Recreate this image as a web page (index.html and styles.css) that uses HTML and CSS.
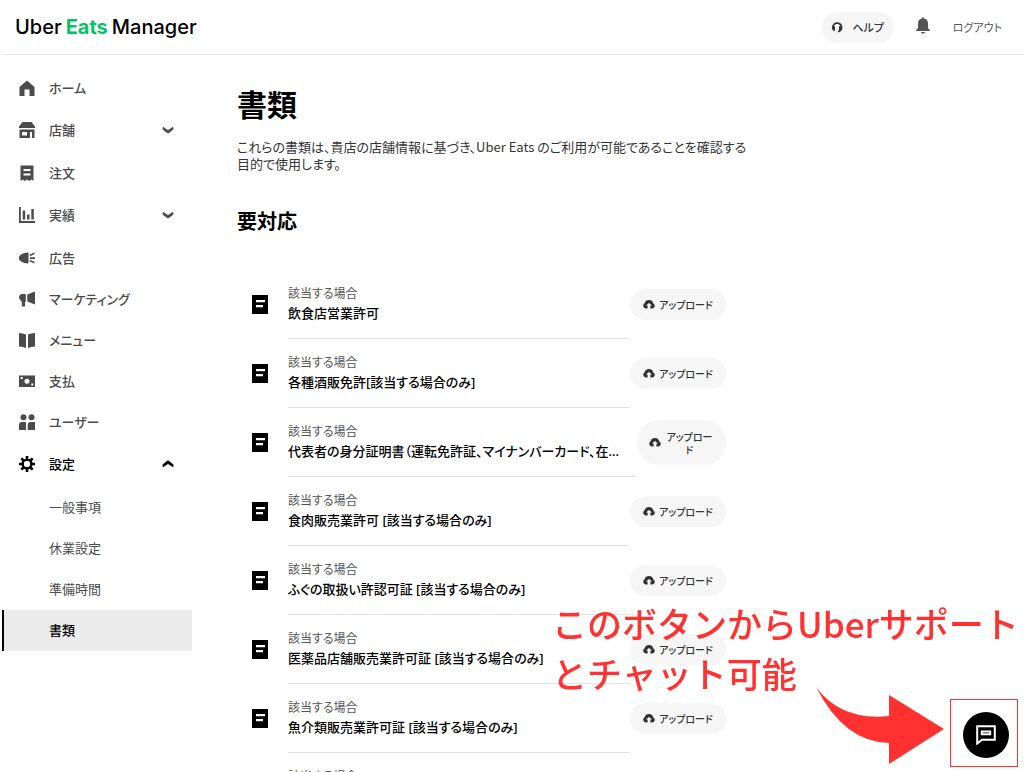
FILE: index.html
```html
<!DOCTYPE html>
<html lang="ja">
<head>
<meta charset="utf-8">
<meta name="viewport" content="width=device-width, initial-scale=1">
<title>書類 - Uber Eats Manager</title>
<link rel="stylesheet" href="styles.css">
</head>
<body>
<svg class="sprite" aria-hidden="true">
  <symbol id="chevron" viewBox="0 0 12 8"><path d="M1 1.300v2.200L6 7.200l5-3.700V1.300L6 4.400z" fill="currentColor" stroke="currentColor" stroke-width=".8"/></symbol>
  <symbol id="doc" viewBox="0 0 16 19"><path fill="currentColor" d="M0 0h16v19H0z"/><path fill="#fff" d="M4 5h9v2.200H4zM4 10h7v2.200H4z"/></symbol>
  <symbol id="cloud" viewBox="0 0 12 9"><path fill="currentColor" d="M4.600 8.500H3A2.800 2.800 0 0 1 1.600 3.300 4.500 4.500 0 0 1 10.300 3.400 2.700 2.700 0 0 1 9 8.500H7.400V5.600H9L6 2.900 3 5.600h1.600z"/></symbol>
</svg>
<header class="topbar">
  <a class="logo" href="#"><span>Uber</span><span class="logo-eats">Eats</span><span>Manager</span></a>
  <div class="actions">
    <button class="pill help" type="button">
      <svg class="help-icon" viewBox="0 0 12 12" aria-hidden="true"><path d="M2.300 8.500A4.400 4.400 0 1 1 10.600 6.500Q10.500 9.800 7 10.600" fill="none" stroke="currentColor" stroke-width="1.700"/><path d="M1 5.300h3v4.400H2.300zM8 5.300h3V8L9.600 9.700H8z" fill="currentColor"/></svg>
      ヘルプ
    </button>
    <button class="bell" type="button" aria-label="通知">
      <svg viewBox="0 0 14 18" aria-hidden="true"><path fill="currentColor" d="M6 1.500V.5h2v1q4 .7 4 5V11l2 2.500V14H0v-.5L2 11V6.500q0-4.300 4-5zM4.500 15h5L7 17z"/></svg>
    </button>
    <a class="logout" href="#">ログアウト</a>
  </div>
</header>
<div class="layout">
  <nav class="sidebar" aria-label="メイン">
    <a class="item" href="#"><svg class="icon" viewBox="0 0 16 16"><path d="M8 .5 15.500 7v9h-5V9.500h-5V16h-5V7z"/></svg><span>ホーム</span></a>
    <a class="item group" href="#"><svg class="icon" viewBox="0 0 16 16"><path d="M3.500 0h9L16 4.500V6H0V4.500zM.5 7.500h15V16H13v-6h-2v6H.5zM3 10v3.500h5V10z" fill-rule="evenodd"/></svg><span>店舗</span><svg class="chev"><use href="#chevron"/></svg></a>
    <a class="item" href="#"><svg class="icon" viewBox="0 0 16 16"><path d="M1.500.5h13V16l-2-1.500-2.200 1.500L8 14.500 5.700 16l-2.200-1.500-2 1.500zM4.500 4v2h7V4zm0 4.500v2h7v-2z" fill-rule="evenodd"/></svg><span>注文</span></a>
    <a class="item group" href="#"><svg class="icon" viewBox="0 0 16 16"><path d="M0 0h1.800v14H16v2H0zM3.700 3.500h2.500v9H3.700zM8 7.500h2.500v5H8zM12.300 2h2.500v10.500h-2.500z"/></svg><span>実績</span><svg class="chev"><use href="#chevron"/></svg></a>
    <a class="item" href="#"><svg class="icon" viewBox="0 0 16 16"><path d="M9.500 2.500v11q-5 0-7.500-2L0 9.500v-3l2-2q2.500-2 7.500-2zM10.800 4.500 15.500 2.500v1.800l-4.700 1.900zM11 7.200h5v1.700h-5zM10.800 9.800l4.700 2v1.800l-4.700-2z"/></svg><span>広告</span></a>
    <a class="item" href="#"><svg class="icon" viewBox="0 0 16 16"><path d="M6.800 3v8H6v4.500H2.800V11.200L1.500 9Q0 8 0 6.500 0 3 3.500 3zM8.300 3.500 16 .5v13l-7.700-3z"/></svg><span>マーケティング</span></a>
    <a class="item" href="#"><svg class="icon" viewBox="0 0 16 16"><path d="M0 1q4 0 7 1.500V16q-3-1.500-7-1.500zM16 1q-4 0-7 1.500V16q3-1.500 7-1.500z"/></svg><span>メニュー</span></a>
    <a class="item" href="#"><svg class="icon" viewBox="0 0 16 16"><path d="M0 2.500h16V14H0zM8 5.700a2.500 2.500 0 1 0 0 5 2.500 2.500 0 0 0 0-5zM1.700 4v2h2V4zm10.600 6.500v2h2v-2z" fill-rule="evenodd"/></svg><span>支払</span></a>
    <a class="item" href="#"><svg class="icon" viewBox="0 0 16 16"><circle cx="4.500" cy="3.300" r="3"/><circle cx="12.500" cy="3.300" r="3"/><path d="M0 16v-5q0-3 3-3h4v8zM8.700 16v-5q0-3 3-3H16v8z"/></svg><span>ユーザー</span></a>
    <a class="item group open" href="#"><svg class="icon" viewBox="0 0 16 16"><circle cx="8" cy="8" r="4.300" fill="none" stroke="currentColor" stroke-width="2.600"/><path d="M8 0v4M8 12v4M0 8h4M12 8h4M2.300 2.300 5 5M11 11l2.700 2.700M13.700 2.300 11 5M5 11l-2.700 2.700" stroke="currentColor" stroke-width="2.600"/><circle cx="8" cy="8" r="3" fill="#fff"/></svg><span>設定</span><svg class="chev up"><use href="#chevron"/></svg></a>
    <a class="item sub" href="#">一般事項</a>
    <a class="item sub" href="#">休業設定</a>
    <a class="item sub" href="#">準備時間</a>
    <a class="item sub current" href="#" aria-current="page">書類</a>
  </nav>
  <main class="main">
    <h1>書類</h1>
    <p class="lead">これらの書類は、貴店の店舗情報に基づき、Uber Eats のご利用が可能であることを確認する目的で使用します。</p>
    <h2>要対応</h2>
    <ul class="docs">
      <li class="doc"><svg class="doc-icon"><use href="#doc"/></svg><div class="doc-text"><small>該当する場合</small><strong>飲食店営業許可</strong></div><button class="pill upload" type="button"><svg><use href="#cloud"/></svg><span>アップロード</span></button></li>
      <li class="doc"><svg class="doc-icon"><use href="#doc"/></svg><div class="doc-text"><small>該当する場合</small><strong>各種酒販免許[該当する場合のみ]</strong></div><button class="pill upload" type="button"><svg><use href="#cloud"/></svg><span>アップロード</span></button></li>
      <li class="doc long"><svg class="doc-icon"><use href="#doc"/></svg><div class="doc-text"><small>該当する場合</small><strong>代表者の身分証明書（運転免許証、マイナンバーカード、在留カード等）</strong></div><button class="pill upload" type="button"><svg><use href="#cloud"/></svg><span>アップロード</span></button></li>
      <li class="doc"><svg class="doc-icon"><use href="#doc"/></svg><div class="doc-text"><small>該当する場合</small><strong>食肉販売業許可 [該当する場合のみ]</strong></div><button class="pill upload" type="button"><svg><use href="#cloud"/></svg><span>アップロード</span></button></li>
      <li class="doc"><svg class="doc-icon"><use href="#doc"/></svg><div class="doc-text"><small>該当する場合</small><strong>ふぐの取扱い許認可証 [該当する場合のみ]</strong></div><button class="pill upload" type="button"><svg><use href="#cloud"/></svg><span>アップロード</span></button></li>
      <li class="doc"><svg class="doc-icon"><use href="#doc"/></svg><div class="doc-text"><small>該当する場合</small><strong>医薬品店舗販売業許可証 [該当する場合のみ]</strong></div><button class="pill upload" type="button"><svg><use href="#cloud"/></svg><span>アップロード</span></button></li>
      <li class="doc"><svg class="doc-icon"><use href="#doc"/></svg><div class="doc-text"><small>該当する場合</small><strong>魚介類販売業許可証 [該当する場合のみ]</strong></div><button class="pill upload" type="button"><svg><use href="#cloud"/></svg><span>アップロード</span></button></li>
      <li class="doc"><div class="doc-icon"></div><div class="doc-text"><small>該当する場合</small></div></li>
    </ul>
  </main>
</div>
<p class="note">このボタンからUberサポート<br>とチャット可能</p>
<svg class="arrow" viewBox="0 0 128 78" aria-hidden="true"><path fill="#ff3131" d="M0 1Q25 35 73 30V9l55 34-55 35V57Q28 56 0 1z"/></svg>
<div class="chat-frame">
  <button class="chat" type="button" aria-label="サポートとチャット">
    <svg viewBox="0 0 20 20" aria-hidden="true"><path d="M1.200 1.200h17.600v13.500H6l-4.800 3.800zM5.800 6.500h8.400v2.700H5.800z" fill="none" stroke="#fff" stroke-width="2"/></svg>
  </button>
</div>
</body>
</html>
```
FILE: styles.css
```css
* { box-sizing: border-box; }
body {
  margin: 0;
  height: 100vh;
  overflow: hidden;
  background: #fff;
  color: #000;
  font: 13px/20px "Noto Sans CJK JP", sans-serif;
  font-feature-settings: "palt";
}
a { color: inherit; text-decoration: none; }
button { border: 0; padding: 0; font: inherit; font-feature-settings: inherit; color: inherit; cursor: pointer; }
.sprite { position: absolute; width: 0; height: 0; }

.topbar {
  display: flex;
  align-items: center;
  justify-content: space-between;
  height: 55px;
  margin-left: 2px;
  padding: 0 22px 0 13px;
  border-bottom: 1px solid #e8e8e8;
}
.logo { display: flex; gap: 4px; font: 500 20px/28px Inter, sans-serif; }
.logo-eats { color: #06c167; font-weight: 700; }
.actions { display: flex; align-items: center; font-size: 11px; color: #545454; }
.pill {
  display: flex;
  align-items: center;
  justify-content: center;
  border-radius: 24px;
  background: #f6f6f6;
  color: #333;
  font-weight: 500;
}
.help { gap: 9px; width: 72px; height: 31px; }
.help-icon { width: 12px; height: 12px; }
.bell { display: flex; margin: 0 23px 2px 22px; background: none; color: #545454; }
.bell svg { width: 14px; height: 18px; }

.layout { display: flex; }
.sidebar { flex: none; width: 190px; margin-left: 2px; padding-top: 13px; color: #4b4b4b; font-weight: 500; }
.item { display: flex; align-items: center; gap: 14px; height: 41px; padding: 0 18px 2px 17px; }
.group { height: 44px; }
.icon { width: 16px; height: 16px; fill: currentColor; }
.chev { width: 12px; height: 8px; margin-left: auto; }
.up { transform: rotate(180deg); }
.open { color: #000; }
.sub { padding-left: 47px; font-weight: 400; }
.current { padding-left: 45px; border-left: 2px solid #000; background: #ebebeb; color: #000; font-weight: 500; }

.main { flex: 1; max-width: 560px; min-width: 0; padding: 26px 0 0 45px; }
h1 { margin: 0; font-size: 30px; line-height: 44px; font-weight: 700; }
.lead { margin: 13px 0 0; line-height: 17px; color: #333; }
h2 { margin: 34px 0 0; font-size: 20px; line-height: 30px; font-weight: 700; }
.docs { list-style: none; margin: 34px 26px 0 0; padding: 0; }
.doc { display: flex; align-items: center; height: 69px; padding-left: 15px; }
.doc-icon { flex: none; width: 16px; height: 19px; margin-right: 20px; }
.doc-text {
  flex: 1;
  min-width: 0;
  height: 69px;
  display: flex;
  flex-direction: column;
  padding-top: 13px;
  border-bottom: 1px solid #e2e2e2;
}
.doc small { font-size: 12px; line-height: 20px; color: #545454; }
.doc strong { font-family: "Noto Sans", "Noto Sans CJK JP", sans-serif; font-weight: 500; overflow: hidden; text-overflow: ellipsis; white-space: nowrap; }
.upload { gap: 4px; width: 96px; height: 31px; font-size: 10px; line-height: 13px; }
.upload svg { flex: none; width: 12px; height: 9px; }
.long .doc-text { padding-right: 12px; }
.long .upload { width: 89px; height: 45px; margin-left: 1px; padding: 0 12px; }

.note { position: fixed; right: 8px; bottom: 74px; width: 464px; margin: 0; font-size: 35px; line-height: 50px; font-weight: 500; color: #ff3131; font-feature-settings: normal; white-space: nowrap; }
.arrow { position: fixed; right: 80px; bottom: 8px; width: 128px; height: 78px; }
.chat-frame { position: fixed; right: 6px; bottom: 5px; display: flex; align-items: center; justify-content: center; width: 68px; height: 68px; padding: 3px 0 0 4px; border: 1px solid #ff3131; }
.chat { display: flex; align-items: center; justify-content: center; width: 46px; height: 46px; border-radius: 50%; background: #000; }
.chat svg { width: 20px; height: 20px; }
```
